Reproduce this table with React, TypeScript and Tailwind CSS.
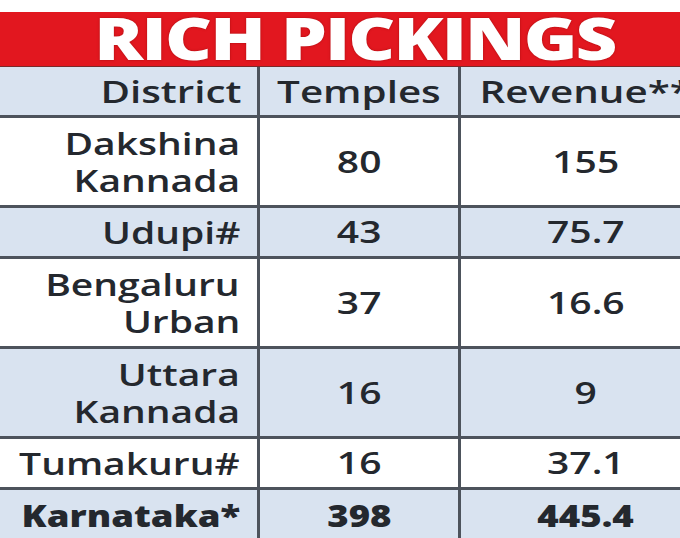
import React from "react";

type Row = {
  d: string[];
  t: string;
  r: string;
  tall: boolean;
  blue: boolean;
  bold?: boolean;
};

const rows: Row[] = [
  { d: ["Dakshina", "Kannada"], t: "80", r: "155", tall: true, blue: false },
  { d: ["Udupi#"], t: "43", r: "75.7", tall: false, blue: true },
  { d: ["Bengaluru", "Urban"], t: "37", r: "16.6", tall: true, blue: false },
  { d: ["Uttara", "Kannada"], t: "16", r: "9", tall: true, blue: true },
  { d: ["Tumakuru#"], t: "16", r: "37.1", tall: false, blue: false },
  { d: ["Karnataka*"], t: "398", r: "445.4", tall: false, blue: true, bold: true },
];

function Txt({ children, origin, bold }: { children: React.ReactNode; origin: "r" | "c"; bold?: boolean }) {
  return (
    <span
      className={
        "inline-block whitespace-nowrap " +
        (origin === "r" ? "origin-right " : "origin-center ") +
        (bold ? "font-extrabold scale-x-[1.22]" : "font-semibold scale-x-[1.3]")
      }
    >
      {children}
    </span>
  );
}

export default function App() {
  return (
    <div className="w-[680px] h-[538px] overflow-hidden bg-white pt-[12px] font-['Open_Sans',sans-serif] text-[#24282e]">
      <div className="w-[710px]">
        <div className="h-[55px] bg-[#e2171f] flex items-center justify-center border-b border-[#7a2a2a]">
          <span className="inline-block scale-x-[1.23] origin-center text-white font-extrabold text-[59px] leading-none tracking-[-1.5px] -mt-[3px] [text-shadow:0_0_2px_rgba(120,0,0,0.6)]">
            RICH PICKINGS
          </span>
        </div>
        <div className="grid grid-cols-[260px_201px_249px] text-[30px]">
          <div className="h-[51px] bg-[#d9e3f0] border-b-[3px] border-r-[3px] border-[#4d535c] flex items-center justify-end pr-[16px] text-[31px] leading-none">
            <Txt origin="r">District</Txt>
          </div>
          <div className="h-[51px] bg-[#d9e3f0] border-b-[3px] border-r-[3px] border-[#4d535c] flex items-center justify-center text-[31px] leading-none">
            <Txt origin="c">Temples</Txt>
          </div>
          <div className="h-[51px] bg-[#d9e3f0] border-b-[3px] border-[#4d535c] flex items-center justify-center text-[31px] leading-none">
            <Txt origin="c">Revenue**</Txt>
          </div>
          {rows.map((row, i) => {
            const h = row.tall ? "h-[90px]" : "h-[51px]";
            const bg = row.blue ? "bg-[#d9e3f0]" : "bg-white";
            const bb = i === rows.length - 1 ? "" : "border-b-[3px]";
            return (
              <React.Fragment key={i}>
                <div
                  className={`${h} ${bg} ${bb} border-r-[3px] border-[#4d535c] flex flex-col items-end justify-center pr-[17px] leading-[37px]`}
                >
                  {row.d.map((l, j) => (
                    <Txt key={j} origin="r" bold={row.bold}>
                      {l}
                    </Txt>
                  ))}
                </div>
                <div
                  className={`${h} ${bg} ${bb} border-r-[3px] border-[#4d535c] flex items-center justify-center leading-none`}
                >
                  <Txt origin="c" bold={row.bold}>
                    {row.t}
                  </Txt>
                </div>
                <div className={`${h} ${bg} ${bb} border-[#4d535c] flex items-center justify-center leading-none`}>
                  <Txt origin="c" bold={row.bold}>
                    {row.r}
                  </Txt>
                </div>
              </React.Fragment>
            );
          })}
        </div>
      </div>
    </div>
  );
}
